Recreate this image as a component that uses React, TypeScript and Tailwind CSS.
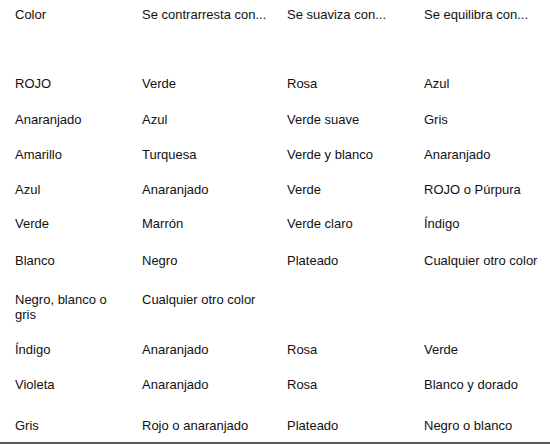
import React from "react";

type Row = { cells: string[]; h: string };

const rows: Row[] = [
  { cells: ["Color", "Se contrarresta con...", "Se suaviza con...", "Se equilibra con..."], h: "h-[69px]" },
  { cells: ["ROJO", "Verde", "Rosa", "Azul"], h: "h-[36px]" },
  { cells: ["Anaranjado", "Azul", "Verde suave", "Gris"], h: "h-[35px]" },
  { cells: ["Amarillo", "Turquesa", "Verde y blanco", "Anaranjado"], h: "h-[35px]" },
  { cells: ["Azul", "Anaranjado", "Verde", "ROJO o Púrpura"], h: "h-[34px]" },
  { cells: ["Verde", "Marrón", "Verde claro", "Índigo"], h: "h-[37px]" },
  { cells: ["Blanco", "Negro", "Plateado", "Cualquier otro color"], h: "h-[39px]" },
  { cells: ["Negro, blanco o gris", "Cualquier otro color", "", ""], h: "h-[50px]" },
  { cells: ["Índigo", "Anaranjado", "Rosa", "Verde"], h: "h-[35px]" },
  { cells: ["Violeta", "Anaranjado", "Rosa", "Blanco y dorado"], h: "h-[41px]" },
  { cells: ["Gris", "Rojo o anaranjado", "Plateado", "Negro o blanco"], h: "h-[24px]" },
];

export default function App() {
  return (
    <div
      className="w-[550px] h-[444px] bg-white text-[#111] text-[13px] leading-[15px] overflow-hidden"
      style={{ fontFamily: '"Liberation Sans", Arial, sans-serif' }}
    >
      <div className="pt-[7px] border-b-2 border-[#5a5a5a]">
        {rows.map((r, i) => (
          <div key={i} className={`grid grid-cols-[127px_145px_137px_1fr] pl-[15px] ${r.h}`}>
            {r.cells.map((c, j) => (
              <div key={j} className={j === 0 ? "pr-[15px]" : ""}>
                {c}
              </div>
            ))}
          </div>
        ))}
      </div>
    </div>
  );
}
